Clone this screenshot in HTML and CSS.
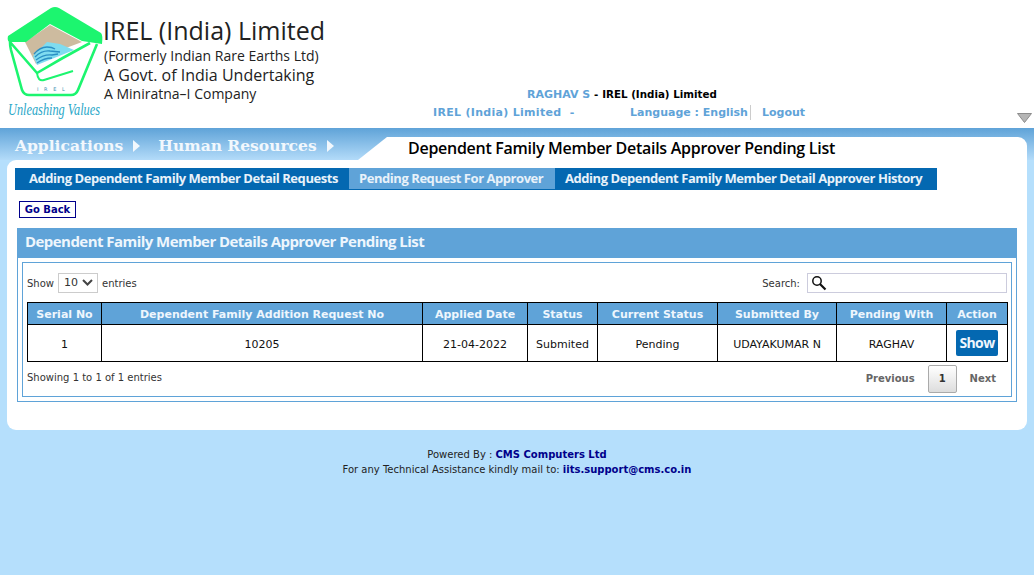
FILE: index.html
```html
<!DOCTYPE html>
<html lang="en">
<head>
  <meta charset="UTF-8" />
  <title>Dependent Family Member Details Approver Pending List</title>
  <link rel="stylesheet" href="styles.css">
</head>
<body>
  <header class="top">
    <div class="brand">
      <svg class="logo" width="102" height="122" viewBox="0 0 102 122">
        <path d="M50 25 L82 42 L66 48 L36 64 L25 42 Z" fill="#cdbb9f"/>
        <path d="M33 56 L47 42 L60 44 L74 50 L37 65 Z" fill="#7fdcf0"/>
        <path d="M34 54 Q40 47 47 47 Q52 47 55 49 M35 57 Q42 50 50 51 L60 52 M36 60 Q44 54 52 55 L58 54 M37 63 Q44 58 52 58" fill="none" stroke="#2a8fc4" stroke-width="1.3"/>
        <path d="M8 36 L51 8 Q55 6 59 8 L101 33 Q103 35 102 44 L82 41 L50 24 L26 42 L9 42 Q7 40 8 36 Z" fill="#1cf56f"/>
        <path d="M10 42 L37 73 Q62 58 90 43 M10 42 Q10 46 11 50 L22 90 Q24 95 29 95 L71 95 Q76 95 78 90 L97 44" fill="none" stroke="#1cf56f" stroke-width="2.6" stroke-linejoin="round"/>
        <path d="M37 73 Q38 82 44 80 L73 71" fill="none" stroke="#1cf56f" stroke-width="2"/>
        <text x="37" y="91" class="logo-mark">I R E L</text>
        <text x="8" y="115" class="logo-tag" textLength="92" lengthAdjust="spacingAndGlyphs">Unleashing Values</text>
      </svg>
      <div class="brand-text">
        <div class="brand-name">IREL (India) Limited</div>
        <div class="brand-former">(Formerly Indian Rare Earths Ltd)</div>
        <div class="brand-govt">A Govt. of India Undertaking</div>
        <div class="brand-mini">A Miniratna&#8211;I Company</div>
      </div>
    </div>
    <div class="user-info">
      <div class="user-line"><a class="top-link">RAGHAV S</a> <span class="user-sep">-</span> <span class="user-org">IREL (India) Limited</span></div>
      <div class="links-line">
        <a class="top-link org-link">IREL (India) Limited &nbsp;-</a>
        <a class="top-link lang-link">Language : English</a>
        <a class="top-link logout-link">Logout</a>
      </div>
    </div>
    <svg class="collapse" width="15" height="10" viewBox="0 0 15 10">
      <path d="M0.5 0.5 H14.5 L7.5 9.5 Z" fill="#b5b5b5" stroke="#8c8c8c"/>
    </svg>
  </header>

  <div class="crumb-bar">
    <div class="crumbs">
      <span class="crumb">Applications</span><span class="crumb-arrow"></span>
      <span class="crumb">Human Resources</span><span class="crumb-arrow"></span>
    </div>
    <div class="slant"></div>
    <h1 class="page-title">Dependent Family Member Details Approver Pending List</h1>
  </div>

  <main class="panel">
    <nav class="tabs">
      <a class="tab">Adding Dependent Family Member Detail Requests</a>
      <a class="tab tab-active">Pending Request For Approver</a>
      <a class="tab">Adding Dependent Family Member Detail Approver History</a>
    </nav>

    <a class="back-btn">Go Back</a>

    <section class="card">
      <h2 class="card-title">Dependent Family Member Details Approver Pending List</h2>
      <div class="card-body">
        <div class="table-top">
          <label class="len-label"><span class="top-text">Show</span>
            <span class="len-select">10
              <svg width="11" height="7" viewBox="0 0 11 7"><path d="M1 1 L5.5 5.5 L10 1" fill="none" stroke="#444" stroke-width="2"/></svg>
            </span>
            <span class="top-text">entries</span></label>
          <label class="search-label"><span class="top-text">Search:</span>
            <span class="search-box">
              <svg width="16" height="16" viewBox="0 0 16 16"><circle cx="6" cy="6" r="4.2" fill="none" stroke="#111" stroke-width="1.5"/><path d="M9 9 L14.5 14.5" stroke="#111" stroke-width="2.2"/></svg>
            </span>
          </label>
        </div>
        <table class="grid">
          <thead>
            <tr>
              <th class="c1">Serial No</th>
              <th class="c2">Dependent Family Addition Request No</th>
              <th class="c3">Applied Date</th>
              <th class="c4">Status</th>
              <th class="c5">Current Status</th>
              <th class="c6">Submitted By</th>
              <th class="c7">Pending With</th>
              <th>Action</th>
            </tr>
          </thead>
          <tbody>
            <tr>
              <td>1</td>
              <td>10205</td>
              <td>21-04-2022</td>
              <td>Submited</td>
              <td>Pending</td>
              <td>UDAYAKUMAR N</td>
              <td>RAGHAV</td>
              <td><a class="show-btn">Show</a></td>
            </tr>
          </tbody>
        </table>
        <div class="table-bottom">
          <span class="info">Showing 1 to 1 of 1 entries</span>
          <div class="pager">
            <span class="page-link">Previous</span>
            <span class="page-num">1</span>
            <span class="page-link">Next</span>
          </div>
        </div>
      </div>
    </section>
  </main>

  <footer class="foot">
    <div>Powered By : <b class="foot-link">CMS Computers Ltd</b></div>
    <div>For any Technical Assistance kindly mail to: <b class="foot-link">iits.support@cms.co.in</b></div>
  </footer>
</body>
</html>
```
FILE: styles.css
```css
html, body {
  margin: 0;
  height: 575px;
  overflow: hidden;
}
body {
  background: #b5dffc;
  font-family: "DejaVu Sans", Verdana, sans-serif;
  font-size: 11px;
  color: #111;
}

/* header */
.top {
  height: 128px;
  background: white;
  display: flex;
  position: relative;
}
.brand {
  display: flex;
  width: 433px;
}
.logo {
  flex: none;
  display: block;
  overflow: visible;
}
.logo-mark {
  font-family: "DejaVu Sans", sans-serif;
  font-size: 5px;
  letter-spacing: 2px;
  fill: #3f8fb0;
}
.logo-tag {
  font-family: "Liberation Serif", serif;
  font-style: italic;
  font-size: 17px;
  fill: #2aa7c8;
}
.brand-text {
  font-family: "Open Sans", sans-serif;
  color: #222;
  padding: 14px 0 0 1px;
}
.brand-name {
  font-size: 25px;
  line-height: 32px;
}
.brand-former {
  font-size: 14px;
  line-height: 20px;
  margin-left: 1px;
}
.brand-govt {
  font-size: 16px;
  line-height: 18px;
  margin-left: 1px;
}
.brand-mini {
  font-size: 14px;
  line-height: 19px;
  margin-left: 1px;
}
.user-info {
  padding-top: 87px;
  font-size: 11px;
  font-weight: bold;
}
.user-line {
  padding-left: 94px;
  line-height: 15px;
}
.links-line {
  display: flex;
  margin-top: 3px;
  line-height: 15px;
}
.top-link {
  color: #5fa3d8;
}
.user-org, .user-sep {
  color: black;
  font-size: 10.3px;
}
.org-link {
  width: 197px;
  letter-spacing: 0.3px;
}
.lang-link {
  padding-right: 2px;
  border-right: 1px solid #ccc;
}
.logout-link {
  margin-left: 11px;
}
.collapse {
  position: absolute;
  right: 2px;
  top: 113px;
}

/* breadcrumb bar */
.crumb-bar {
  height: 32px;
  display: flex;
  background: linear-gradient(#5fa3d8, #b3dbf9);
}
.crumbs {
  width: 358px;
  padding: 6px 0 0 15px;
  box-sizing: border-box;
  display: flex;
  align-items: flex-start;
  white-space: nowrap;
}
.crumb {
  font-family: "DejaVu Serif", serif;
  font-weight: bold;
  font-size: 15.5px;
  line-height: 24px;
  color: #f2f8fd;
}
.crumb-arrow {
  margin: 6px 18px 0 10px;
  border-left: 7px solid #f2f8fd;
  border-top: 6px solid transparent;
  border-bottom: 6px solid transparent;
}
.slant {
  width: 29px;
  margin-top: 9px;
  background: white;
  clip-path: polygon(0 100%, 100% 0, 100% 100%);
}
.page-title {
  width: 640px;
  margin: 9px 0 0;
  padding-left: 21px;
  box-sizing: border-box;
  background: white;
  border-top-right-radius: 9px;
  font-family: "Open Sans", sans-serif;
  font-size: 16px;
  font-weight: 600;
  letter-spacing: -0.28px;
  line-height: 23px;
  color: black;
}

/* panel */
.panel {
  margin: 0 7px;
  width: 1020px;
  height: 270px;
  padding: 8px 10px 0 10px;
  box-sizing: border-box;
  background: white;
  border-radius: 9px 0 9px 9px;
}
.tabs {
  display: grid;
  grid-template-columns: 334px 206px 1fr;
  width: 922px;
  margin-left: -2px;
  height: 22px;
  background: #0468b1;
}
.tab {
  font-family: "Open Sans", sans-serif;
  font-weight: 700;
  font-size: 13px;
  letter-spacing: -0.45px;
  line-height: 21px;
  color: #e8f2fa;
  padding-left: 10px;
  height: 21px;
  white-space: nowrap;
}
.tab:first-child {
  padding-left: 14px;
}
.tab-active {
  background: #5fa3d8;
}
.back-btn {
  display: block;
  width: 55px;
  margin: 11px 0 0 2px;
  border: 1px solid #00008b;
  color: #00008b;
  font-weight: bold;
  font-size: 10px;
  line-height: 14px;
  padding-top: 1px;
  text-align: center;
}
.card {
  margin-top: 10px;
  border: 1px solid #5fa3d8;
  height: 172px;
}
.card-title {
  margin: 0;
  height: 29px;
  background: #5fa3d8;
  color: #eef6fd;
  font-family: "Open Sans", sans-serif;
  font-weight: 700;
  font-size: 15px;
  letter-spacing: -0.55px;
  line-height: 25px;
  padding-left: 7px;
}
.card-body {
  margin: 4px 4px 0;
  height: 133px;
  border: 1px solid #5fa3d8;
  padding: 0 4px;
  font-size: 10px;
}
.table-top {
  display: flex;
  justify-content: space-between;
  align-items: center;
  height: 39px;
  color: #333;
}
.len-label, .search-label {
  display: flex;
  align-items: center;
}
.top-text {
  padding-top: 2px;
}
.len-select {
  width: 40px;
  height: 20px;
  margin: 0 4px;
  padding: 0 4px 0 5px;
  box-sizing: border-box;
  border: 1px solid #ccc;
  display: flex;
  align-items: center;
  justify-content: space-between;
  font-size: 11px;
}
.search-box {
  width: 200px;
  height: 20px;
  margin-left: 7px;
  box-sizing: border-box;
  border: 1px solid #ccd;
  padding: 1px 3px;
  display: flex;
}
.grid {
  border-collapse: collapse;
  table-layout: fixed;
  width: 981px;
  text-align: center;
}
.grid th, .grid td {
  border: 1px solid black;
  padding: 1px 0 0;
}
.grid th {
  background: #5fa3d8;
  color: #eef6fd;
  font-weight: bold;
  font-size: 11px;
  height: 20px;
}
.grid td {
  padding-top: 2px;
  height: 34px;
  font-size: 11px;
  color: #111;
}
.c1 { width: 73px; }
.c2 { width: 320px; }
.c3 { width: 104px; }
.c4 { width: 69px; }
.c5 { width: 119px; }
.c6 { width: 118px; }
.c7 { width: 109px; }
.show-btn {
  display: inline-block;
  width: 42px;
  height: 26px;
  margin-top: -2px;
  background: #0468b1;
  color: #eef6fd;
  border-radius: 2px;
  font-family: "Open Sans", sans-serif;
  font-weight: 700;
  font-size: 14px;
  letter-spacing: -0.6px;
  line-height: 25px;
  vertical-align: middle;
}
.table-bottom {
  display: flex;
  justify-content: space-between;
  height: 35px;
  color: #333;
}
.info {
  padding-top: 10px;
}
.pager {
  display: flex;
  align-items: flex-start;
  padding: 3px 11px 0 0;
  font-weight: bold;
  color: #666;
}
.page-link {
  line-height: 28px;
}
.page-num {
  width: 27px;
  height: 26px;
  margin: 0 13px;
  border: 1px solid #aaa;
  border-radius: 2px;
  background: linear-gradient(#fff, #ddd);
  color: #333;
  line-height: 26px;
  text-align: center;
}

/* footer */
.foot {
  margin-top: 17px;
  text-align: center;
  font-size: 10px;
  line-height: 15px;
  color: #222;
}
.foot-link {
  color: #00008b;
}
```
